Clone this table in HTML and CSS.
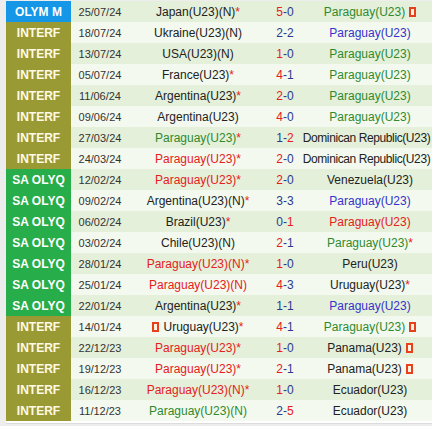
FILE: index.html
```html
<!DOCTYPE html>
<html>
<head>
<meta charset="utf-8">
<link rel="stylesheet" href="styles.css">
</head>
<body>
<div class="page">
  <div class="row"><div class="comp olym">OLYM M</div><div class="date">25/07/24</div><div class="home">Japan(U23)(N)<span class="star">*</span></div><div class="score"><span class="w">5</span>-0</div><div class="away"><span class="g">Paraguay(U23)</span><span class="card"></span></div></div>
  <div class="row"><div class="comp intf">INTERF</div><div class="date">18/07/24</div><div class="home">Ukraine(U23)(N)</div><div class="score">2-2</div><div class="away"><span class="b">Paraguay(U23)</span></div></div>
  <div class="row"><div class="comp intf">INTERF</div><div class="date">13/07/24</div><div class="home">USA(U23)(N)</div><div class="score"><span class="w">1</span>-0</div><div class="away"><span class="g">Paraguay(U23)</span></div></div>
  <div class="row"><div class="comp intf">INTERF</div><div class="date">05/07/24</div><div class="home">France(U23)<span class="star">*</span></div><div class="score"><span class="w">4</span>-1</div><div class="away"><span class="g">Paraguay(U23)</span></div></div>
  <div class="row"><div class="comp intf">INTERF</div><div class="date">11/06/24</div><div class="home">Argentina(U23)<span class="star">*</span></div><div class="score"><span class="w">2</span>-0</div><div class="away"><span class="g">Paraguay(U23)</span></div></div>
  <div class="row"><div class="comp intf">INTERF</div><div class="date">09/06/24</div><div class="home">Argentina(U23)</div><div class="score"><span class="w">4</span>-0</div><div class="away"><span class="g">Paraguay(U23)</span></div></div>
  <div class="row"><div class="comp intf">INTERF</div><div class="date">27/03/24</div><div class="home"><span class="g">Paraguay(U23)</span><span class="star">*</span></div><div class="score">1-<span class="w">2</span></div><div class="away long">Dominican Republic(U23)</div></div>
  <div class="row"><div class="comp intf">INTERF</div><div class="date">24/03/24</div><div class="home"><span class="r">Paraguay(U23)</span><span class="star">*</span></div><div class="score"><span class="w">2</span>-0</div><div class="away long">Dominican Republic(U23)</div></div>
  <div class="row"><div class="comp saoq">SA OLYQ</div><div class="date">12/02/24</div><div class="home"><span class="r">Paraguay(U23)</span><span class="star">*</span></div><div class="score"><span class="w">2</span>-0</div><div class="away">Venezuela(U23)</div></div>
  <div class="row"><div class="comp saoq">SA OLYQ</div><div class="date">09/02/24</div><div class="home">Argentina(U23)(N)<span class="star">*</span></div><div class="score">3-3</div><div class="away"><span class="b">Paraguay(U23)</span></div></div>
  <div class="row"><div class="comp saoq">SA OLYQ</div><div class="date">06/02/24</div><div class="home">Brazil(U23)<span class="star">*</span></div><div class="score">0-<span class="w">1</span></div><div class="away"><span class="r">Paraguay(U23)</span></div></div>
  <div class="row"><div class="comp saoq">SA OLYQ</div><div class="date">03/02/24</div><div class="home">Chile(U23)(N)</div><div class="score"><span class="w">2</span>-1</div><div class="away"><span class="g">Paraguay(U23)</span><span class="star">*</span></div></div>
  <div class="row"><div class="comp saoq">SA OLYQ</div><div class="date">28/01/24</div><div class="home"><span class="r">Paraguay(U23)(N)</span><span class="star">*</span></div><div class="score"><span class="w">1</span>-0</div><div class="away">Peru(U23)</div></div>
  <div class="row"><div class="comp saoq">SA OLYQ</div><div class="date">25/01/24</div><div class="home"><span class="r">Paraguay(U23)(N)</span></div><div class="score"><span class="w">4</span>-3</div><div class="away">Uruguay(U23)<span class="star">*</span></div></div>
  <div class="row"><div class="comp saoq">SA OLYQ</div><div class="date">22/01/24</div><div class="home">Argentina(U23)<span class="star">*</span></div><div class="score">1-1</div><div class="away"><span class="b">Paraguay(U23)</span></div></div>
  <div class="row"><div class="comp intf">INTERF</div><div class="date">14/01/24</div><div class="home"><span class="card pre"></span>Uruguay(U23)<span class="star">*</span></div><div class="score"><span class="w">4</span>-1</div><div class="away"><span class="g">Paraguay(U23)</span><span class="card"></span></div></div>
  <div class="row"><div class="comp intf">INTERF</div><div class="date">22/12/23</div><div class="home"><span class="r">Paraguay(U23)</span><span class="star">*</span></div><div class="score"><span class="w">1</span>-0</div><div class="away">Panama(U23)<span class="card"></span></div></div>
  <div class="row"><div class="comp intf">INTERF</div><div class="date">19/12/23</div><div class="home"><span class="r">Paraguay(U23)</span><span class="star">*</span></div><div class="score"><span class="w">2</span>-1</div><div class="away">Panama(U23)<span class="card"></span></div></div>
  <div class="row"><div class="comp intf">INTERF</div><div class="date">16/12/23</div><div class="home"><span class="r">Paraguay(U23)(N)</span><span class="star">*</span></div><div class="score"><span class="w">1</span>-0</div><div class="away">Ecuador(U23)</div></div>
  <div class="row"><div class="comp intf">INTERF</div><div class="date">11/12/23</div><div class="home"><span class="g">Paraguay(U23)(N)</span></div><div class="score">2-<span class="w">5</span></div><div class="away">Ecuador(U23)</div></div>
</div>
</body>
</html>
```
FILE: styles.css
```css
html, body {
  margin: 0;
  padding: 0;
  background: #ededed;
}
body {
  width: 432px;
  height: 426px;
  overflow: hidden;
  font-family: "Liberation Sans", Arial, sans-serif;
  color: #222;
}
.page {
  margin-left: 6px;
  margin-top: 1px;
  background: #fff;
  display: flex;
  flex-direction: column;
  padding-bottom: 2px;
  border-bottom: 1px solid #dcdcdc;
}
.row {
  display: grid;
  grid-template-columns: 65px 58px 138px 36px minmax(0, 1fr);
  height: 21px;
  align-items: stretch;
  font-size: 12px;
  white-space: nowrap;
}
.row:nth-child(odd) { background: #e4f0d9; }
.row:nth-child(even) { background: #f3f9ee; }
.row > div {
  display: flex;
  align-items: center;
  min-width: 0;
}
.comp {
  justify-content: center;
  color: #fff;
  font-weight: bold;
  font-size: 12px;
}
.olym { background: #1596e6; }
.intf { background: #9a9a34; color: #fffbe6; }
.saoq { background: #27ad4a; }
.date {
  justify-content: center;
  font-size: 11px;
  color: #333;
}
.home {
  justify-content: center;
}
.score {
  justify-content: center;
  color: #2b3990;
}
.away {
  justify-content: center;
  padding-left: 5px;
}
.away.long {
  padding-left: 0;
  padding-right: 2px;
  letter-spacing: -0.4px;
}
.w { color: #e5201c; }
.star { color: #e5201c; }
.g { color: #2f8a2f; }
.r { color: #e5201c; }
.b { color: #3333cc; }
.card {
  display: inline-block;
  flex: none;
  width: 7px;
  height: 10px;
  margin-left: 4px;
  background: #e8401c;
  position: relative;
}
.card::after {
  content: "";
  position: absolute;
  left: 2px;
  top: 2px;
  width: 3px;
  height: 6px;
  background: #fff3e0;
}
.card.pre {
  margin-left: 0;
  margin-right: 4px;
}
```
